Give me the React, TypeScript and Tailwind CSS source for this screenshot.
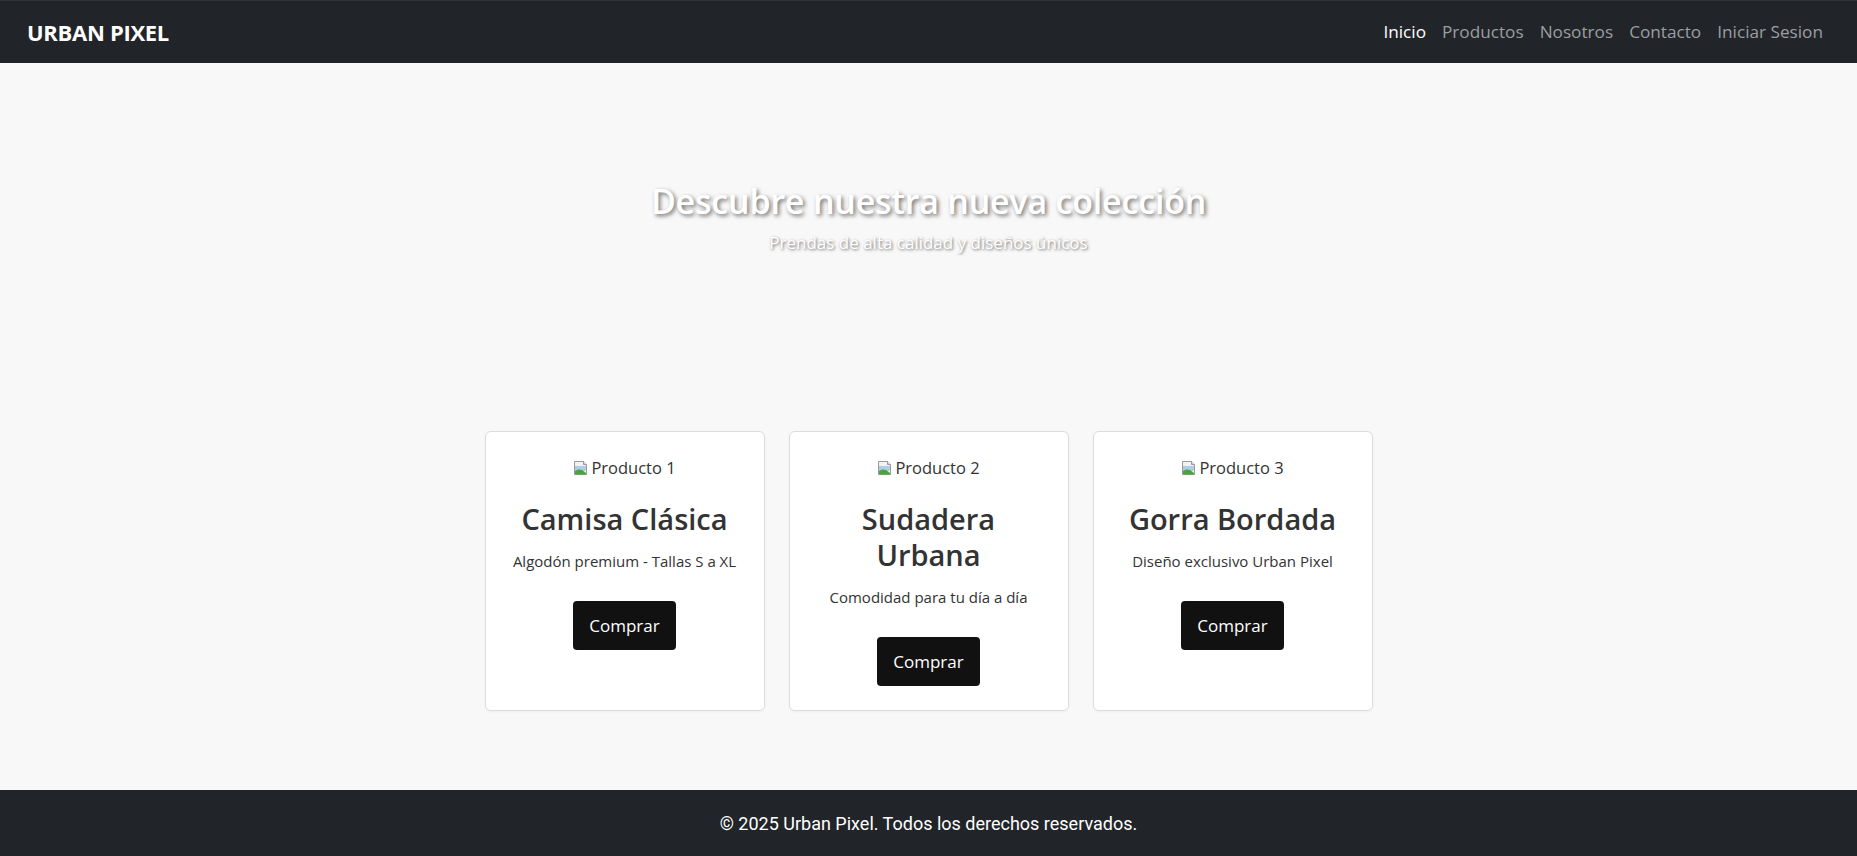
import type { ReactNode } from "react";

const products = [
  { alt: "Producto 1", name: "Camisa Clásica", desc: "Algodón premium - Tallas S a XL" },
  { alt: "Producto 2", name: "Sudadera Urbana", desc: "Comodidad para tu día a día" },
  { alt: "Producto 3", name: "Gorra Bordada", desc: "Diseño exclusivo Urban Pixel" },
];

const links = ["Inicio", "Productos", "Nosotros", "Contacto", "Iniciar Sesion"];

/** The browser's broken-image glyph shown in front of the alt text. */
function BrokenImage() {
  return (
    <svg width="16" height="16" viewBox="0 0 16 16" className="mr-[2px] inline-block align-[-2px]" aria-hidden="true">
      <path d="M1.5 1.5h9l3 3v10h-12z" fill="#f2f2f2" stroke="#9a9a9a" />
      <path d="M10.5 1.5v3h3" fill="#e0e0e0" stroke="#9a9a9a" />
      <path d="M2 6h11v4l-3 2-2-1.5L5 13H2z" fill="#a9cdea" />
      <path d="M2 14.5V11c2-1.5 4-2 7-1l4 3v1.5z" fill="#4ea43c" />
    </svg>
  );
}

function Card({ children }: { children: ReactNode }) {
  return (
    <div className="flex w-[280px] flex-col items-center rounded-[6px] border border-[#dcdcdc] bg-white px-6 pb-6 pt-6 text-center shadow-[0_1px_3px_rgba(0,0,0,0.04)]">
      {children}
    </div>
  );
}

export default function App() {
  return (
    <div className="flex min-h-screen flex-col bg-[#f8f8f8] font-['Open_Sans',sans-serif]">
      <nav className="flex h-[63px] items-center justify-between border-t border-[#2e3136] bg-[#212529] pl-[27px] pr-[26px]">
        <a href="#" className="text-[22px] font-bold tracking-[-0.3px] text-white">
          URBAN PIXEL
        </a>
        <ul className="flex items-center">
          {links.map((label, i) => (
            <li key={label}>
              <a
                href="#"
                className={`block px-[8px] text-[17.2px] ${i === 0 ? "text-white" : "text-[#9b9ea1]"}`}
              >
                {label}
              </a>
            </li>
          ))}
        </ul>
      </nav>

      <main className="flex flex-col items-center">
        <section className="flex flex-col items-center pt-[114px] text-white">
          <h1 className="text-[34px] font-semibold leading-[48px] tracking-[-0.2px] [text-shadow:2px_2px_4px_rgba(0,0,0,0.55)]">
            Descubre nuestra nueva colección
          </h1>
          <p className="mt-[3px] text-[17px] leading-[30px] [text-shadow:1px_1px_3px_rgba(0,0,0,0.6)]">
            Prendas de alta calidad y diseños únicos
          </p>
        </section>

        <section className="mt-[173px] flex gap-[24px]">
          {products.map((p) => (
            <Card key={p.alt}>
              <div className="flex h-[24px] items-center text-[16.5px] text-[#333]">
                <BrokenImage />
                {p.alt}
              </div>
              <h3 className="mt-[21px] max-w-[220px] text-[29px] font-semibold leading-[36px] text-[#333]">
                {p.name}
              </h3>
              <p className="mt-[12px] text-[15px] leading-[24px] text-[#333]">{p.desc}</p>
              <button
                type="button"
                className="mt-[28px] h-[49px] rounded-[4px] bg-[#111] px-[16px] text-[17px] text-white"
              >
                Comprar
              </button>
            </Card>
          ))}
        </section>
      </main>

      <footer className="mt-auto flex h-[66px] items-center justify-center bg-[#212529] font-['Roboto',sans-serif] text-[18px] text-white">
        © 2025 Urban Pixel. Todos los derechos reservados.
      </footer>
    </div>
  );
}
